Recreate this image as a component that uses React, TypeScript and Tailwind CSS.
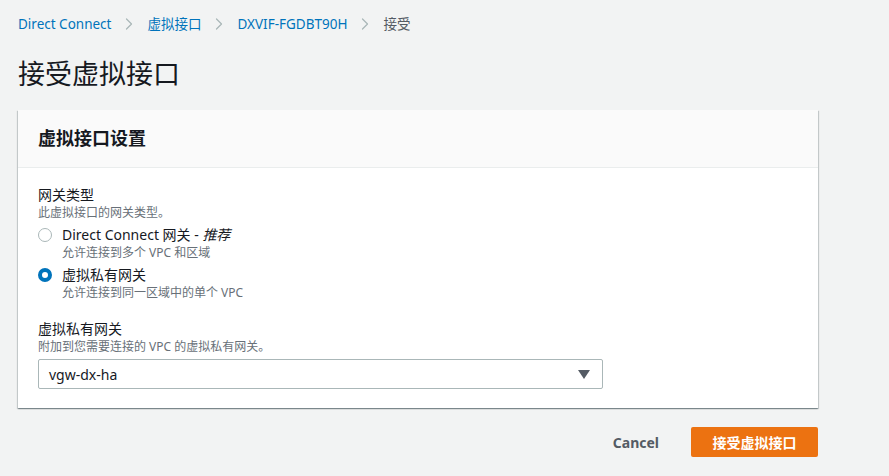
import { ChevronRight } from 'lucide-react';

const crumbs = ['Direct Connect', '虚拟接口', 'DXVIF-FGDBT90H'];

const Radio = ({ checked }: { checked: boolean }) =>
  checked ? (
    <span className="block box-border h-[14px] w-[14px] shrink-0 rounded-full border-[4px] border-[#0073bb] bg-white" />
  ) : (
    <span className="block box-border h-[14px] w-[14px] shrink-0 rounded-full border border-[#aab7b8] bg-white" />
  );

const App: React.FC = () => {
  return (
    <div
      className="h-[476px] w-[889px] overflow-hidden bg-[#f2f3f3] text-[#16191f]"
      style={{ fontFamily: '"Noto Sans", "Noto Sans CJK SC", sans-serif' }}
    >
      <div className="pl-[18px] pt-[14px]">
        {/* Breadcrumbs */}
        <nav className="flex h-[20px] items-center text-[13.5px]">
          {crumbs.map((c) => (
            <div key={c} className="flex items-center">
              <span className="text-[#0073bb]">{c}</span>
              <ChevronRight className="mx-[8px] h-[20px] w-[20px] text-[#aab7b8]" strokeWidth={1.5} />
            </div>
          ))}
          <span className="text-[#545b64]">接受</span>
        </nav>

        {/* Title */}
        <h1 className="mt-[23px] text-[27px] leading-[34px] font-normal">接受虚拟接口</h1>

        {/* Card */}
        <div className="mt-[19px] w-[800px] bg-white shadow-[0_1px_1px_0_rgba(0,28,36,0.3),1px_1px_1px_0_rgba(0,28,36,0.15),-1px_1px_1px_0_rgba(0,28,36,0.15)]">
          <div className="flex h-[58px] items-center border-b border-[#eaeded] bg-[#fafafa] px-[20px]">
            <h2 className="text-[18px] font-bold">虚拟接口设置</h2>
          </div>
          <div className="px-[20px] pt-[17px] pb-[19px]">
            <div className="text-[14px] leading-[20px]">网关类型</div>
            <div className="text-[12px] leading-[16px] text-[#687078]">此虚拟接口的网关类型。</div>

            <div className="mt-[4px] flex gap-[10px]">
              <div className="pt-[3px]"><Radio checked={false} /></div>
              <div>
                <div className="text-[14px] leading-[20px]">
                  Direct Connect 网关 - <i>推荐</i>
                </div>
                <div className="text-[12px] leading-[16px] text-[#687078]">允许连接到多个 VPC 和区域</div>
              </div>
            </div>
            <div className="mt-[4px] flex gap-[10px]">
              <div className="pt-[3px]"><Radio checked /></div>
              <div>
                <div className="text-[14px] leading-[20px]">虚拟私有网关</div>
                <div className="text-[12px] leading-[16px] text-[#687078]">允许连接到同一区域中的单个 VPC</div>
              </div>
            </div>

            <div className="mt-[18px] text-[14px] leading-[20px]">虚拟私有网关</div>
            <div className="text-[12px] leading-[16px] text-[#687078]">附加到您需要连接的 VPC 的虚拟私有网关。</div>
            <div className="mt-[4px] flex h-[30px] w-[565px] items-center justify-between rounded-[2px] border border-[#aab7b8] bg-white pl-[10px] pr-[12px]">
              <span className="text-[14px]">vgw-dx-ha</span>
              <svg width="12" height="9" viewBox="0 0 12 9">
                <path d="M0 0h12L6 9z" fill="#545b64" />
              </svg>
            </div>
          </div>
        </div>

        {/* Footer */}
        <div className="mt-[19px] flex w-[800px] items-center justify-end gap-[12px]">
          <button className="px-[20px] text-[14px] font-bold text-[#545b64]">Cancel</button>
          <button className="h-[30px] w-[127px] rounded-[2px] bg-[#ec7211] text-[14px] font-bold text-white">
            接受虚拟接口
          </button>
        </div>
      </div>
    </div>
  );
};

export default App;
